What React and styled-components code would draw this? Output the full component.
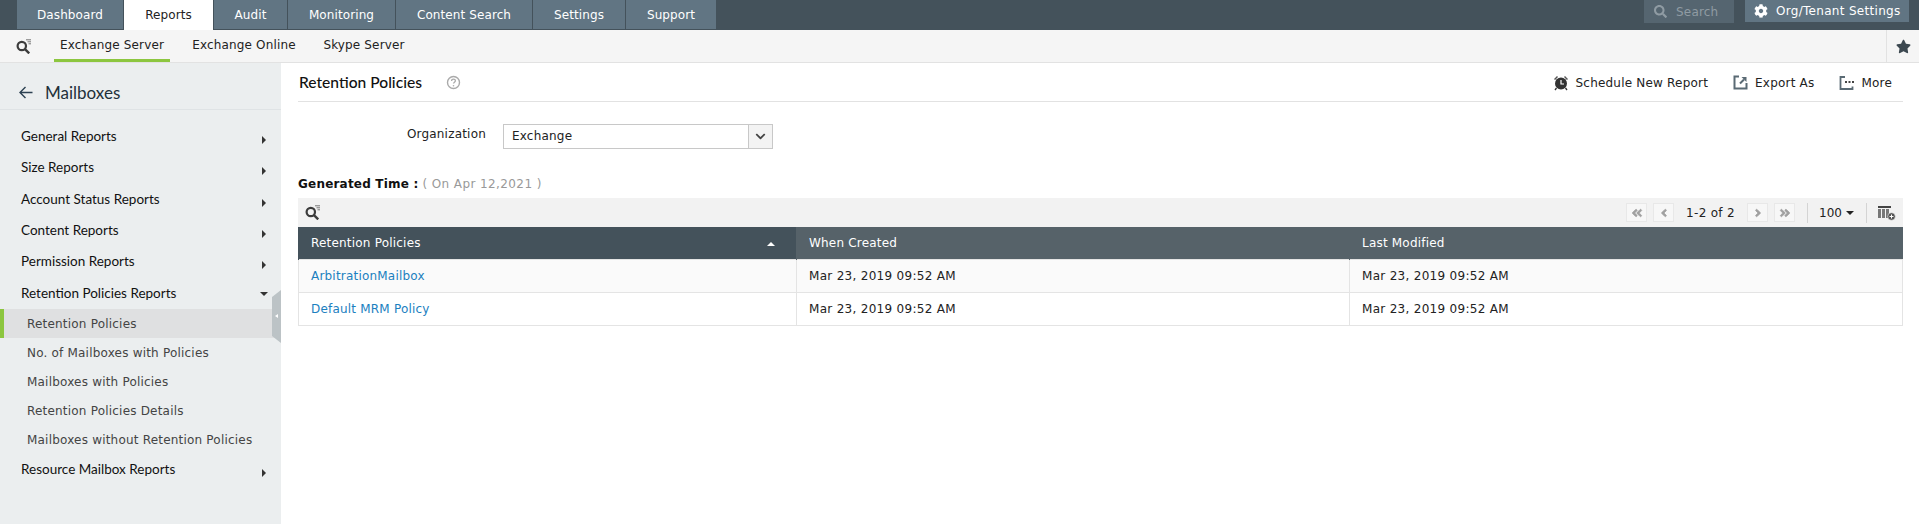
import React from "react";
import styled, { createGlobalStyle } from "styled-components";
import {
  FaCog,
  FaStar,
  FaSearch,
  FaChevronDown,
  FaAngleDoubleLeft,
  FaAngleDoubleRight,
  FaAngleLeft,
  FaAngleRight,
} from "react-icons/fa";

const GlobalStyle = createGlobalStyle`
  html, body {
    margin: 0;
    padding: 0;
    height: 100%;
    overflow: hidden;
    background: #fff;
  }
  #root {
    height: 100%;
  }
  * {
    box-sizing: border-box;
  }
`;

const BASE_FONT = `"DejaVu Sans", Verdana, sans-serif`;
const HEAD_FONT = `Lato, "Noto Sans", sans-serif`;

const Page = styled.div`
  display: flex;
  flex-direction: column;
  height: 100%;
  font-family: ${BASE_FONT};
  font-size: 12px;
  letter-spacing: 0.2px;
  color: #222;
`;

const TopBar = styled.div`
  display: flex;
  justify-content: space-between;
  height: 30px;
  padding-left: 17px;
  background: #44525b;
`;

const Tabs = styled.div`
  display: flex;
  height: 29px;
`;

const Tab = styled.div`
  display: flex;
  align-items: center;
  justify-content: center;
  width: ${({ $w }) => $w}px;
  margin-right: 1px;
  letter-spacing: 0.1px;
  background: ${({ $active }) => ($active ? "#fff" : "#617583")};
  color: ${({ $active }) => ($active ? "#222" : "#fff")};
  height: ${({ $active }) => ($active ? "30px" : "29px")};
`;

const TopRight = styled.div`
  display: flex;
  align-items: flex-start;
  padding-right: 10px;
  gap: 11px;
`;

const SearchBox = styled.div`
  display: flex;
  align-items: center;
  width: 90px;
  height: 23px;
  padding-left: 10px;
  gap: 9px;
  background: #556570;
  color: #8f9ba3;
`;

const OrgButton = styled.div`
  display: flex;
  align-items: center;
  width: 164px;
  height: 22px;
  padding-left: 9px;
  gap: 8px;
  background: #617583;
  color: #fff;
  letter-spacing: 0.3px;
`;

const SubBar = styled.div`
  display: flex;
  align-items: stretch;
  height: 33px;
  background: #f5f5f5;
  border-bottom: 1px solid #e2e2e2;
`;

const SubSearch = styled.div`
  display: flex;
  align-items: center;
  width: 54px;
  padding-left: 16px;
`;

const SubTab = styled.div`
  display: flex;
  align-items: center;
  justify-content: center;
  height: 32px;
  width: ${({ $w }) => $w}px;
  margin-right: ${({ $gap }) => $gap}px;
  letter-spacing: 0.15px;
  color: #222;
  border-bottom: 3px solid ${({ $active }) => ($active ? "#8cc63f" : "transparent")};
`;

const StarCell = styled.div`
  display: flex;
  align-items: center;
  justify-content: center;
  width: 33px;
  margin-left: auto;
  border-left: 1px solid #e2e2e2;
  color: #3c4850;
  font-size: 15px;
`;

const Body = styled.div`
  display: flex;
  flex: 1;
  min-height: 0;
`;

const Sidebar = styled.aside`
  position: relative;
  width: 281px;
  flex-shrink: 0;
  background: #ebeeef;
  font-family: ${HEAD_FONT};
  letter-spacing: 0;
`;

const SideHead = styled.div`
  display: flex;
  align-items: center;
  height: 47px;
  padding: 12px 0 0 19px;
  gap: 12px;
  border-bottom: 1px solid #dfe3e5;
  font-size: 17px;
  color: #22303a;
`;

const SideList = styled.div`
  padding-top: 11px;
`;

const Group = styled.div`
  position: relative;
  display: flex;
  align-items: center;
  height: 31.3px;
  padding: 0 0 1px 21px;
  font-size: 13.5px;
  color: #111;
`;

const Caret = styled.span`
  position: absolute;
  right: 15px;
  top: 15px;
  width: 0;
  height: 0;
  ${({ $open }) =>
    $open
      ? `border-left: 4px solid transparent; border-right: 4px solid transparent; border-top: 4px solid #333; right: 13px;`
      : `border-top: 4px solid transparent; border-bottom: 4px solid transparent; border-left: 4px solid #333;`}
`;

const SubItem = styled.div`
  display: flex;
  align-items: center;
  height: 29px;
  padding: 1px 0 0 ${({ $active }) => ($active ? "23px" : "27px")};
  font-family: ${BASE_FONT};
  font-size: 12px;
  letter-spacing: 0.2px;
  color: #444;
  background: ${({ $active }) => ($active ? "#dfe0e1" : "transparent")};
  border-left: ${({ $active }) => ($active ? "4px solid #8cc63f" : "none")};
`;

const CollapseHandle = styled.div`
  position: absolute;
  right: 0;
  top: 227px;
  width: 9px;
  height: 53px;
  background: #bcc3c6;
  clip-path: polygon(0 7px, 100% 0, 100% 100%, 0 46px);
  &::after {
    content: "";
    position: absolute;
    left: 3px;
    top: 24px;
    border-top: 2px solid transparent;
    border-bottom: 2px solid transparent;
    border-right: 3px solid #fff;
  }
`;

const Main = styled.main`
  flex: 1;
  min-width: 0;
  padding: 0 16px 0 17px;
`;

const TitleRow = styled.div`
  display: flex;
  align-items: center;
  height: 39px;
  border-bottom: 1px solid #e2e2e2;
`;

const Title = styled.div`
  font-family: ${HEAD_FONT};
  font-size: 15.6px;
  font-weight: 500;
  letter-spacing: 0;
  color: #111;
  margin-right: 24px;
  padding-left: 1px;
`;

const Actions = styled.div`
  display: flex;
  align-items: center;
  margin-left: auto;
  margin-right: 11px;
  padding-top: 1px;
`;

const Action = styled.div`
  display: flex;
  align-items: center;
  gap: 7px;
  margin-left: 25px;
  color: #222;
`;

const FormRow = styled.div`
  display: flex;
  align-items: center;
  margin-top: 21px;
  height: 26px;
`;

const FormLabel = styled.label`
  width: 188px;
  padding-bottom: 4px;
  text-align: right;
  color: #222;
`;

const Select = styled.div`
  display: flex;
  align-items: stretch;
  width: 270px;
  height: 25px;
  margin-left: 17px;
  border: 1px solid #c8c8c8;
`;

const SelectValue = styled.div`
  display: flex;
  align-items: center;
  flex: 1;
  padding-left: 8px;
`;

const SelectArrow = styled.div`
  display: flex;
  align-items: center;
  justify-content: center;
  width: 24px;
  background: #f3f3f3;
  border-left: 1px solid #c8c8c8;
  color: #444;
  font-size: 11px;
`;

const Generated = styled.div`
  display: flex;
  align-items: center;
  height: 16px;
  margin-top: 27px;
  gap: 4px;
  font-weight: 700;
  color: #111;
`;

const GeneratedDate = styled.span`
  font-weight: 400;
  letter-spacing: 0.4px;
  color: #999;
`;

const Toolbar = styled.div`
  display: flex;
  align-items: center;
  height: 29px;
  margin-top: 6px;
  padding: 0 7px;
  background: #f2f2f2;
`;

const Pager = styled.div`
  display: flex;
  align-items: center;
  margin-left: auto;
`;

const PageBtn = styled.div`
  display: flex;
  align-items: center;
  justify-content: center;
  width: 21px;
  height: 19px;
  margin-left: ${({ $first }) => ($first ? 0 : 6)}px;
  background: #f7f7f7;
  border: 1px solid #e8e8e8;
  color: #a0a0a0;
  font-size: 12px;
  svg {
    stroke: currentColor;
    stroke-width: 30;
  }
`;

const PageText = styled.span`
  width: 49px;
  margin: 0 12px;
  white-space: nowrap;
  letter-spacing: 0.3px;
  color: #222;
`;

const Divider = styled.span`
  width: 1px;
  height: 20px;
  margin: 0 ${({ $last }) => ($last ? 10 : 11)}px 0 12px;
  background: #d4d4d4;
`;

const PageSize = styled.span`
  display: flex;
  align-items: center;
  gap: 4px;
  letter-spacing: 0;
  color: #222;
`;

const SizeCaret = styled.span`
  width: 0;
  height: 0;
  border-left: 4px solid transparent;
  border-right: 4px solid transparent;
  border-top: 4px solid #222;
`;

const Table = styled.table`
  width: 100%;
  border-collapse: collapse;
  table-layout: fixed;
`;

const Th = styled.th`
  position: relative;
  height: 32px;
  padding: 0 12px;
  text-align: left;
  font-size: 12px;
  font-weight: 400;
  color: #fff;
  background: ${({ $sorted }) => ($sorted ? "#44525b" : "#566269")};
  border-left: 1px solid ${({ $sorted }) => ($sorted ? "#44525b" : "#566269")};
  width: ${({ $w }) => ($w ? `${$w}px` : "auto")};
`;

const SortUp = styled.span`
  position: absolute;
  right: 21px;
  top: 15px;
  width: 0;
  height: 0;
  border-left: 4px solid transparent;
  border-right: 4px solid transparent;
  border-bottom: 4px solid #fff;
`;

const Td = styled.td`
  height: 33px;
  padding: 0 12px;
  border: 1px solid #e4e4e4;
  font-size: 12px;
  letter-spacing: ${({ $date }) => ($date ? "0.3px" : "0.2px")};
  color: #222;
  background: ${({ $odd }) => ($odd ? "#fafafa" : "#fff")};
`;

const Link = styled.a`
  color: #1b80bf;
  text-decoration: none;
`;

const FilterIcon = () => (
  <svg width="15" height="15" viewBox="0 0 15 15" fill="none">
    <circle cx="5.8" cy="7" r="4.2" stroke="#3c3c3c" strokeWidth="2.2" />
    <path d="M9 10.2l4.2 4.2" stroke="#3c3c3c" strokeWidth="2.4" />
    <path d="M10 .8h5M11.5 2.8h3.5M12.5 4.8h2.5" stroke="#777" strokeWidth="1" />
  </svg>
);

const AlarmIcon = () => (
  <svg width="16" height="16" viewBox="0 0 16 16">
    <circle cx="8" cy="8.5" r="6" fill="#333" />
    <path d="M1 4l3-3 1 1-3 3zM15 4l-3-3-1 1 3 3z" fill="#555" />
    <path d="M3.5 13l-1.5 2M12.5 13l1.5 2" stroke="#333" strokeWidth="1.3" />
    <path d="M8 5v4h3" stroke="#fff" strokeWidth="1.2" fill="none" />
  </svg>
);

const ExportIcon = () => (
  <svg width="15" height="15" viewBox="0 0 15 15" fill="none">
    <path d="M6 1.5H1.5v12h12V8" stroke="#5a6a74" strokeWidth="2" />
    <path d="M7 8.5L11 4.5" stroke="#5a6a74" strokeWidth="2" />
    <path d="M8.5 2h5v5z" fill="#5a6a74" />
  </svg>
);

const MoreIcon = () => (
  <svg width="15" height="15" viewBox="0 0 15 15" fill="none">
    <path d="M6 2H1.5v12h12v-2.5" stroke="#5a6a74" strokeWidth="1.8" />
    <path d="M6 7h2M9.5 7h2M13 7h2" stroke="#444" strokeWidth="1.8" />
  </svg>
);

const ColumnsIcon = () => (
  <svg width="19" height="16" viewBox="0 0 19 16">
    <path d="M1 1h13v2H1z" fill="#444" />
    <path d="M1 4h3v9H1zM5 4h3v9H5zM9 4h3v9H9z" fill="#777" />
    <circle cx="14.5" cy="11.5" r="3.8" fill="#555" stroke="#f2f2f2" strokeWidth=".6" />
    <path d="M12.5 11.5h4M14.5 9.5v4" stroke="#fff" strokeWidth="1" />
  </svg>
);

const HelpIcon = () => (
  <svg width="15" height="15" viewBox="0 0 15 15" fill="none">
    <circle cx="7.5" cy="7.5" r="6" stroke="#aaa" strokeWidth="1.4" />
    <path d="M5.6 6c0-1.2.9-1.8 1.9-1.8s1.9.6 1.9 1.6c0 1.3-1.9 1.4-1.9 2.8" stroke="#aaa" strokeWidth="1.3" />
    <circle cx="7.5" cy="10.8" r=".8" fill="#aaa" />
  </svg>
);

const BackIcon = () => (
  <svg width="14" height="13" viewBox="0 0 14 13" fill="none">
    <path d="M13.5 6.5H1.5M6.5 1L1 6.5 6.5 12" stroke="#2c4152" strokeWidth="1.4" />
  </svg>
);

const TABS = [
  { label: "Dashboard", w: 106 },
  { label: "Reports", w: 89, active: true },
  { label: "Audit", w: 73 },
  { label: "Monitoring", w: 107 },
  { label: "Content Search", w: 136 },
  { label: "Settings", w: 92 },
  { label: "Support", w: 90 },
];

const ROWS = [
  { name: "ArbitrationMailbox", created: "Mar 23, 2019 09:52 AM", modified: "Mar 23, 2019 09:52 AM" },
  { name: "Default MRM Policy", created: "Mar 23, 2019 09:52 AM", modified: "Mar 23, 2019 09:52 AM" },
];

export default function App() {
  return (
    <Page>
      <GlobalStyle />
      <TopBar>
        <Tabs>
          {TABS.map((t) => (
            <Tab key={t.label} $w={t.w} $active={t.active}>
              {t.label}
            </Tab>
          ))}
        </Tabs>
        <TopRight>
          <SearchBox>
            <FaSearch size={13} color="#8f9ba3" />
            Search
          </SearchBox>
          <OrgButton>
            <FaCog size={14} color="#fff" />
            Org/Tenant Settings
          </OrgButton>
        </TopRight>
      </TopBar>
      <SubBar>
        <SubSearch>
          <FilterIcon />
        </SubSearch>
        <SubTab $w={116} $gap={18} $active>
          Exchange Server
        </SubTab>
        <SubTab $w={112} $gap={21}>
          Exchange Online
        </SubTab>
        <SubTab $w={86}>Skype Server</SubTab>
        <StarCell>
          <FaStar />
        </StarCell>
      </SubBar>
      <Body>
        <Sidebar>
          <SideHead>
            <BackIcon />
            Mailboxes
          </SideHead>
          <SideList>
            {["General Reports", "Size Reports", "Account Status Reports", "Content Reports", "Permission Reports"].map((g) => (
              <Group key={g}>
                {g}
                <Caret />
              </Group>
            ))}
            <Group>
              Retention Policies Reports
              <Caret $open />
            </Group>
            <SubItem $active>Retention Policies</SubItem>
            <SubItem>No. of Mailboxes with Policies</SubItem>
            <SubItem>Mailboxes with Policies</SubItem>
            <SubItem>Retention Policies Details</SubItem>
            <SubItem>Mailboxes without Retention Policies</SubItem>
            <Group>
              Resource Mailbox Reports
              <Caret />
            </Group>
          </SideList>
          <CollapseHandle />
        </Sidebar>
        <Main>
          <TitleRow>
            <Title>Retention Policies</Title>
            <HelpIcon />
            <Actions>
              <Action>
                <AlarmIcon />
                Schedule New Report
              </Action>
              <Action>
                <ExportIcon />
                Export As
              </Action>
              <Action>
                <MoreIcon />
                More
              </Action>
            </Actions>
          </TitleRow>
          <FormRow>
            <FormLabel>Organization</FormLabel>
            <Select>
              <SelectValue>Exchange</SelectValue>
              <SelectArrow>
                <FaChevronDown />
              </SelectArrow>
            </Select>
          </FormRow>
          <Generated>
            Generated Time :<GeneratedDate>( On Apr 12,2021 )</GeneratedDate>
          </Generated>
          <Toolbar>
            <FilterIcon />
            <Pager>
              <PageBtn>
                <FaAngleDoubleLeft />
              </PageBtn>
              <PageBtn>
                <FaAngleLeft />
              </PageBtn>
              <PageText>1-2 of 2</PageText>
              <PageBtn $first>
                <FaAngleRight />
              </PageBtn>
              <PageBtn>
                <FaAngleDoubleRight />
              </PageBtn>
              <Divider />
              <PageSize>
                100
                <SizeCaret />
              </PageSize>
              <Divider $last />
              <ColumnsIcon />
            </Pager>
          </Toolbar>
          <Table>
            <thead>
              <tr>
                <Th $w={498} $sorted>
                  Retention Policies
                  <SortUp />
                </Th>
                <Th $w={553}>When Created</Th>
                <Th>Last Modified</Th>
              </tr>
            </thead>
            <tbody>
              {ROWS.map((r, i) => (
                <tr key={r.name}>
                  <Td $odd={i === 0}>
                    <Link>{r.name}</Link>
                  </Td>
                  <Td $odd={i === 0} $date>
                    {r.created}
                  </Td>
                  <Td $odd={i === 0} $date>
                    {r.modified}
                  </Td>
                </tr>
              ))}
            </tbody>
          </Table>
        </Main>
      </Body>
    </Page>
  );
}
